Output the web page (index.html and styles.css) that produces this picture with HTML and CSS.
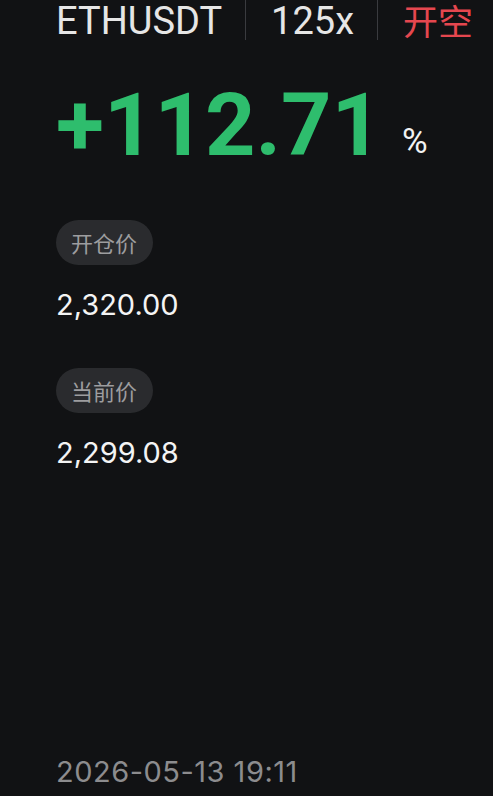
FILE: index.html
```html
<!DOCTYPE html>
<html>
<head>
<meta charset="utf-8">
<meta name="viewport" content="width=device-width, initial-scale=1.0">
<title>ETHUSDT 125x</title>
<link rel="stylesheet" href="styles.css">
</head>
<body>
<div class="card">
  <div class="head">
    <span class="symbol">ETHUSDT</span>
    <span class="sep"></span>
    <span class="lev">125x</span>
    <span class="sep"></span>
    <span class="side">开空</span>
  </div>
  <div class="pnl">
    <span class="rate">+112.71</span>
    <span class="pct">%</span>
  </div>
  <div class="field">
    <span class="tag">开仓价</span>
    <span class="price">2,320.00</span>
  </div>
  <div class="field">
    <span class="tag">当前价</span>
    <span class="price">2,299.08</span>
  </div>
  <div class="time">2026-05-13 19:11</div>
</div>
</body>
</html>
```

FILE: styles.css
```css
html, body {
  margin: 0;
  height: 100%;
  background: #111214;
}
body {
  font-family: Roboto, "Noto Sans CJK SC", sans-serif;
  color: #ececec;
}
.card {
  height: 100%;
  box-sizing: border-box;
  padding: 0 0 7px 56px;
  display: flex;
  flex-direction: column;
  align-items: flex-start;
}
.head {
  display: flex;
  align-items: center;
  height: 40px;
}
.symbol, .lev {
  font-size: 38px;
  line-height: 40px;
  color: #e6e6e6;
  position: relative;
  top: 1px;
}
.sep {
  width: 1px;
  height: 40px;
  background: #3a3b3f;
  margin: 0 25px 0 23px;
}
.side {
  font-family: "Noto Sans CJK SC", sans-serif;
  font-size: 35px;
  line-height: 40px;
  color: #e5474f;
}
.pnl {
  display: flex;
  align-items: baseline;
  margin-top: 41px;
}
.rate {
  font-size: 88px;
  font-weight: 700;
  line-height: 88px;
  color: #2ebd6d;
}
.pct {
  font-size: 35px;
  color: #f2f2f2;
  margin-left: 20px;
  position: relative;
  top: -2px;
}
.field {
  display: flex;
  flex-direction: column;
  align-items: flex-start;
  gap: 23px;
}
.field + .field { margin-top: 46px; }
.pnl + .field { margin-top: 51px; }
.tag {
  font-family: "Noto Sans CJK SC", sans-serif;
  font-size: 22px;
  line-height: 45px;
  padding: 0 16px 0 15px;
  border-radius: 23px;
  background: #2a2b2e;
  color: #9d9d9f;
}
.price {
  font-family: Inter, Roboto, sans-serif;
  font-size: 29px;
  line-height: 34px;
  color: #f4f4f4;
}
.time {
  margin-top: auto;
  font-family: Inter, Roboto, sans-serif;
  font-size: 29px;
  letter-spacing: 0.5px;
  line-height: 34px;
  color: #8c8c8e;
}
```
